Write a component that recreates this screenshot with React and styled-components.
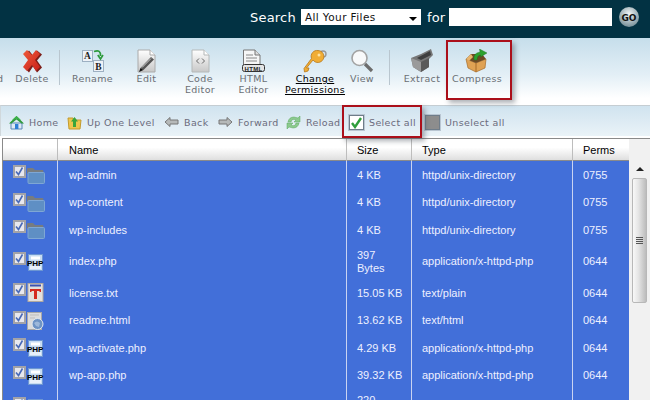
import React from 'react';
import styled, { createGlobalStyle } from 'styled-components';

const Global = createGlobalStyle`
  html, body { margin: 0; padding: 0; background: #fff; }
`;

const Page = styled.div`
  position: relative;
  width: 650px;
  height: 400px;
  overflow: hidden;
  background: #fff;
  font-family: "DejaVu Sans", Verdana, sans-serif;
`;

const SearchBar = styled.div`
  height: 38px;
  background: #023243;
  display: flex;
  align-items: center;
  padding: 0 10px 4px 250px;
  box-sizing: border-box;
  color: #fff;
  font-size: 13px;
`;

const SearchWord = styled.span`
  margin-right: ${props => props.gap}px;
  letter-spacing: .2px;
`;

const FakeSelect = styled.div`
  width: 120px;
  height: 16px;
  background: #fff;
  color: #111;
  font-size: 10.5px;
  line-height: 17px;
  padding-left: 4px;
  box-sizing: border-box;
  margin-right: 6px;
  position: relative;
  letter-spacing: .4px;
  &::after {
    content: '';
    position: absolute;
    right: 4px;
    top: 8px;
    border: 4px solid transparent;
    border-top: 4px solid #000;
    border-bottom: 0;
  }
`;

const SearchInput = styled.div`
  width: 163px;
  height: 18px;
  background: #fff;
  margin: 0 7px 0 -1px;
`;

const Toolbar = styled.div`
  height: 67px;
  display: flex;
  align-items: flex-start;
  padding-top: 11px;
  box-sizing: border-box;
  background: linear-gradient(#c6deeb, #e3eff6 55%, #fff 90%);
  overflow: hidden;
`;

const Tool = styled.div`
  width: ${props => props.width}px;
  margin-left: ${props => props.offset || 0}px;
  flex: none;
  display: flex;
  flex-direction: column;
  align-items: center;
  color: ${props => props.active ? '#000' : '#6a6f74'};
  text-decoration: ${props => props.active ? 'underline' : 'none'};
  font-size: 9.5px;
  line-height: 11px;
  letter-spacing: .35px;
  text-align: center;
`;

const ToolIcon = styled.div`
  height: 24px;
`;

const ClippedTool = styled.div`
  width: 3px;
  margin-right: 2px;
  flex: none;
  overflow: hidden;
  display: flex;
  justify-content: flex-end;
  padding-top: 24px;
  color: #6a6f74;
  font-size: 9.5px;
  line-height: 11px;
`;

const ToolSep = styled.div`
  width: 1px;
  height: 35px;
  flex: none;
  margin-top: 1px;
  background: #b9c6cf;
`;

const NavBar = styled.div`
  height: 31px;
  display: flex;
  align-items: center;
  padding: 2px 0 0 8px;
  box-sizing: border-box;
  border-top: 1px solid #c5cdd2;
  border-left: 1px solid #d0d8dc;
  background: linear-gradient(#d0e3ef, #eaf3f8);
  color: #6b6b7c;
  font-size: 9.5px;
  letter-spacing: .36px;
`;

const NavItem = styled.div`
  display: flex;
  align-items: center;
  gap: 5px;
  flex: none;
  width: ${props => props.width}px;
`;

const Table = styled.div`
  margin: 2px 0 0 2px;
  border-top: 1px solid #8a8a8a;
  border-left: 1px solid #8a8a8a;
  display: flex;
  font-family: "Liberation Sans", Arial, sans-serif;
  font-size: 11px;
`;

const Rows = styled.div`
  width: 626px;
  flex: none;
`;

const columns = '54px 289px 65px 161px 57px';

const HeadRow = styled.div`
  display: grid;
  grid-template-columns: ${columns};
  height: 21px;
  background: linear-gradient(#fff 40%, #dfdfdf);
  border-bottom: 1px solid #8a8a8a;
  color: #000;
`;

const HeadCell = styled.div`
  padding-left: ${props => props.inset || 10}px;
  line-height: 22px;
  box-sizing: border-box;
  border-left: ${props => props.first ? 'none' : '1px solid #bdbdbd'};
`;

const Row = styled.div`
  display: grid;
  grid-template-columns: ${columns};
  height: ${props => props.height}px;
  background: #426fd9;
  color: #eef0ff;
`;

const Cell = styled.div`
  padding: 0 8px 0 ${props => props.inset || 10}px;
  box-sizing: border-box;
  display: flex;
  align-items: center;
  line-height: 13px;
  border-left: 1px solid #c9d3f2;
`;

const IconCell = styled.div`
  display: flex;
  align-items: center;
  padding-left: 10px;
`;

const IconGroup = styled.div`
  display: flex;
  align-items: flex-start;
  height: 20px;
`;

const Check = styled.div`
  width: 13px;
  height: 13px;
  flex: none;
  box-sizing: border-box;
  background: #e8e8ee;
  border: 2px solid #a3a3a8;
  display: flex;
  align-items: center;
  justify-content: center;
`;

const FileIcon = styled.div`
  margin: ${props => props.top}px 0 0 1px;
  flex: none;
`;

const Scrollbar = styled.div`
  width: 21px;
  height: 262px;
  flex: none;
  background: #f1f1f1;
  position: relative;
`;

const ScrollArrow = styled.div`
  position: absolute;
  left: 7px;
  top: 28px;
  border: 4px solid transparent;
  border-bottom: 4px solid #222;
  border-top: 0;
`;

const Thumb = styled.div`
  position: absolute;
  left: 3px;
  top: 39px;
  width: 15px;
  height: 125px;
  box-sizing: border-box;
  border: 1px solid #b8b8b8;
  border-radius: 2px;
  background: linear-gradient(90deg, #f8f8f8, #e6e6e6 40%, #bcbcbc);
  display: flex;
  flex-direction: column;
  align-items: center;
  justify-content: center;
  gap: 1px;
`;

const Grip = styled.div`
  width: 7px;
  height: 1px;
  background: #555;
`;

const Highlight = styled.div`
  position: absolute;
  left: ${props => props.x}px;
  top: ${props => props.y}px;
  width: ${props => props.w}px;
  height: ${props => props.h}px;
  box-sizing: border-box;
  border: 2px solid #ab0f1a;
  box-shadow: 3px 3px 5px rgba(70, 80, 90, .45);
`;

const BigCheck = styled.div`
  width: 15px;
  height: 15px;
  box-sizing: border-box;
  border: 1px solid #6f7d8a;
  background: ${props => props.filled ? '#8d8d8d' : '#fff'};
  outline: 1px solid #b9c6d2;
  display: flex;
  align-items: center;
  justify-content: center;
`;

const DeleteIcon = () => (
  <svg width="22" height="24" viewBox="0 0 22 24">
    <defs>
      <linearGradient id="del" x1="0" y1="0" x2="1" y2="1">
        <stop offset="0" stopColor="#ee5a3a" />
        <stop offset="1" stopColor="#c91f1a" />
      </linearGradient>
    </defs>
    <path d="M3 5 L7 1 L11 6 L15 1 L20 5 L15 11 L20 18 L15 23 L11 17 L7 23 L3 19 L7 11 Z" fill="#7d1d18" transform="translate(1 .6)" />
    <path d="M2 5 L6 1 L11 6 L15 1 L19 5 L14 11 L19 18 L15 22 L11 16 L6 22 L2 18 L7 11 Z" fill="url(#del)" />
  </svg>
);

const RenameIcon = () => (
  <svg width="22" height="24" viewBox="0 0 22 24">
    <rect x="0.5" y="1.5" width="10" height="11" fill="#eef2f7" stroke="#9db0c2" />
    <text x="2" y="10" fontFamily="Liberation Serif" fontSize="9.5" fontWeight="700" fill="#222">A</text>
    <rect x="11.5" y="11.5" width="10" height="11" fill="#eef2f7" stroke="#9db0c2" />
    <text x="13.2" y="20.5" fontFamily="Liberation Serif" fontSize="9.5" fontWeight="700" fill="#222">B</text>
    <path d="M12 2.5 Q19 0 18.5 7 M15.8 6 L18.5 10 L21 6" fill="none" stroke="#2d9a3c" strokeWidth="1.7" />
  </svg>
);

const EditIcon = () => (
  <svg width="19" height="24" viewBox="0 0 19 24">
    <defs>
      <linearGradient id="page" x1="0" y1="0" x2="0" y2="1">
        <stop offset="0" stopColor="#fff" />
        <stop offset="1" stopColor="#c8c8c8" />
      </linearGradient>
    </defs>
    <path d="M1 1 H13 L18 6 V23 H1 Z" fill="url(#page)" stroke="#aaa" />
    <path d="M13 1 V6 H18" fill="#fff" stroke="#aaa" />
    <path d="M3.5 19 L14 8 L17 10.5 L6.5 21 Z" fill="#555" />
    <path d="M5 18.5 L14 9.5" stroke="#eee" strokeWidth=".8" />
    <path d="M2 23 L3.5 19 L6.5 21 Z" fill="#111" />
  </svg>
);

const CodeIcon = () => (
  <svg width="19" height="24" viewBox="0 0 19 24">
    <path d="M1 1 H13 L18 6 V23 H1 Z" fill="url(#page)" stroke="#b4b8b8" />
    <path d="M13 1 V6 H18" fill="#fff" stroke="#b4b8b8" />
    <path d="M8 9.5 L5.5 12 L8 14.5 M11 9.5 L13.5 12 L11 14.5" fill="none" stroke="#666" />
  </svg>
);

const HtmlIcon = () => (
  <svg width="23" height="24" viewBox="0 0 23 24">
    <path d="M1.5 1 H13 L18 6 V17 H1.5 Z" fill="#f6f6f6" stroke="#777" />
    <path d="M13 1 V6 H18" fill="#ddd" stroke="#777" />
    <path d="M4 6 H11 M4 9 H15 M4 12 H15" stroke="#888" />
    <rect x="0.5" y="15.5" width="22" height="7" rx="2" fill="#e4e4e4" stroke="#333" />
    <text x="2.5" y="21.5" fontFamily="Liberation Sans" fontSize="6" fontWeight="700" fill="#222">HTML</text>
  </svg>
);

const KeyIcon = () => (
  <svg width="24" height="24" viewBox="0 0 24 24">
    <circle cx="20" cy="5" r="3" fill="none" stroke="#999" strokeWidth="1.4" />
    <path d="M15 1.5 a6 6 0 1 1 -5 9.5 L3.5 19 L6 19 L5 22 L1.5 23 L1 19.5 L8.5 9.5 A6 6 0 0 1 15 1.5 Z" fill="#f0ad35" stroke="#b8791a" strokeWidth=".8" />
    <circle cx="16" cy="6" r="1.5" fill="#ffe3a0" />
  </svg>
);

const ViewIcon = () => (
  <svg width="24" height="24" viewBox="0 0 24 24">
    <circle cx="9.5" cy="9" r="7.5" fill="#f8f9fa" stroke="#a2a2a2" strokeWidth="1.6" />
    <path d="M15 15 L22 22" stroke="#6c6c6c" strokeWidth="3.2" />
  </svg>
);

const ExtractIcon = () => (
  <svg width="24" height="24" viewBox="0 0 24 24">
    <path d="M1 9 L11 5 L21 0 L23 6 L19 10 V18 L11 23 L3 18 Z" fill="#777" />
    <path d="M11 13 L19 9 V18 L11 23 Z" fill="#5a5a5a" />
    <path d="M1 9 L11 13 V23 L3 18 Z" fill="#9a9a9a" />
    <path d="M7 9 L20 2 L21 6 L11 11 Z" fill="#3e3e3e" />
  </svg>
);

const CompressIcon = () => (
  <svg width="24" height="24" viewBox="0 0 24 24">
    <path d="M1 10 L11 14 L21 10 L20 19 L11 23 L3 19 Z" fill="#dfa254" stroke="#a66b28" strokeWidth=".7" />
    <path d="M11 14 V23" stroke="#a66b28" />
    <path d="M1 10 L6 5 L17 5 L21 10 L11 14 Z" fill="#6d4a24" />
    <path d="M1 10 L6 5 L8 8 L4 12 Z" fill="#e8b36b" />
    <path d="M9 11 Q8 4 15 3 L14.5 0 L22 4 L15.5 8 L15.5 6 Q12 6.5 12 11 Z" fill="#2ca12f" stroke="#1d6d20" strokeWidth=".4" />
  </svg>
);

const HomeIcon = () => (
  <svg width="15" height="15" viewBox="0 0 15 15">
    <path d="M2 8 V14 H13 V8 Z" fill="#dfe9f4" stroke="#5a88b8" />
    <rect x="6" y="9" width="3.4" height="5" fill="#2f7fd6" />
    <path d="M0 8.5 L7.5 1 L15 8.5 L12.5 8.5 L7.5 4.5 L2.5 8.5 Z" fill="#2f9a3c" />
    <path d="M3 5 L7.5 1 L12 5 L7.5 4 Z" fill="#3cb04a" />
  </svg>
);

const UpIcon = () => (
  <svg width="15" height="15" viewBox="0 0 15 15">
    <path d="M1 3 H6 L7 5 H14 L13 14 H2 Z" fill="#efc64d" stroke="#c39a2c" />
    <path d="M7.5 2 L11 6.5 H9 V12 H6 V6.5 H4 Z" fill="#3aa53c" />
  </svg>
);

const ArrowIcon = ({ flip }) => (
  <svg width="15" height="12" viewBox="0 0 15 12" transform={flip ? 'scale(-1 1)' : undefined}>
    <path d="M1 6 L6 1.5 V4 H14 V8 H6 V10.5 Z" fill="#b6b9b9" stroke="#777" />
  </svg>
);

const ReloadIcon = () => (
  <svg width="15" height="15" viewBox="0 0 15 15">
    <path d="M2 7 Q3 2 8 2 L12 3 L14 1 V7 H8 L10 5 Q6 3 5 7 Z" fill="#8cc98e" stroke="#5aa85c" strokeWidth=".5" />
    <path d="M13 8 Q12 13 7 13 L3 12 L1 14 V8 H7 L5 10 Q9 12 10 8 Z" fill="#8cc98e" stroke="#5aa85c" strokeWidth=".5" />
  </svg>
);

const GoIcon = () => (
  <svg width="20" height="20" viewBox="0 0 20 20">
    <defs>
      <radialGradient id="go" cx=".5" cy=".35" r=".7">
        <stop offset="0" stopColor="#f2f6f7" />
        <stop offset="1" stopColor="#6d8791" />
      </radialGradient>
    </defs>
    <circle cx="10" cy="10" r="10" fill="url(#go)" />
    <text x="10" y="13.5" textAnchor="middle" fontFamily="DejaVu Sans" fontSize="9" fontWeight="700" fill="#111">GO</text>
  </svg>
);

const SmallTick = () => (
  <svg width="9" height="9" viewBox="0 0 9 9">
    <path d="M1 4.5 L3.5 7.5 L7.5 .5" fill="none" stroke="#4a6bb8" strokeWidth="1.6" />
  </svg>
);

const BigTick = () => (
  <svg width="13" height="13" viewBox="0 0 13 13">
    <path d="M2 7 L5 11 L11 2" fill="none" stroke="#2f9e3c" strokeWidth="2.4" />
  </svg>
);

const FolderIcon = () => (
  <svg width="18" height="16" viewBox="0 0 18 16">
    <path d="M0 1 Q0 0 1 0 H6 L8 2 H16 L17 6 H0 Z" fill="#777c80" />
    <rect x="1" y="4.5" width="16.5" height="11" rx="1" fill="#5f8fc4" stroke="#7fa7d4" />
  </svg>
);

const PhpIcon = () => (
  <svg width="17" height="17" viewBox="0 0 17 17">
    <rect x="1.5" y="0.5" width="14" height="16" fill="#c7dcf2" stroke="#6d96d2" />
    <rect x="4" y="2.5" width="9" height="3" fill="#fff" />
    <rect x="3" y="12" width="11" height="3" fill="#e8f0fa" />
    <text x="0" y="11.5" fontFamily="Liberation Sans" fontSize="8" fontWeight="700" fill="#000">PHP</text>
  </svg>
);

const TextIcon = () => (
  <svg width="17" height="19" viewBox="0 0 17 19">
    <rect x="1" y="0.5" width="15" height="18" fill="#e4e0dc" stroke="#b0a8a0" />
    <path d="M3 2.5 H14" stroke="#3c52b0" strokeWidth="2" />
    <path d="M3 6 H14 V9 H12.5 V8 H10 V16 H7 V8 H4.5 V9 H3 Z" fill="#d42a20" />
  </svg>
);

const HtmlFileIcon = () => (
  <svg width="17" height="18" viewBox="0 0 17 18">
    <rect x="0.5" y="0.5" width="14" height="17" fill="#dcdcdc" stroke="#a8a8a8" />
    <path d="M3 3 H12 M3 6 H8" stroke="#bdbdbd" />
    <circle cx="10.5" cy="12" r="5.5" fill="#6d93c4" stroke="#dfe6ee" />
    <path d="M7 11 Q10 8 13 11 L12 15 L9 14 Z" fill="#9db8da" />
  </svg>
);

const icons = {
  folder: { drawing: <FolderIcon />, top: 3 },
  php: { drawing: <PhpIcon />, top: 2 },
  text: { drawing: <TextIcon />, top: 0 },
  html: { drawing: <HtmlFileIcon />, top: 1 },
};

const files = [
  { name: 'wp-admin', size: '4 KB', type: 'httpd/unix-directory', perms: '0755', icon: 'folder', height: 28 },
  { name: 'wp-content', size: '4 KB', type: 'httpd/unix-directory', perms: '0755', icon: 'folder', height: 27 },
  { name: 'wp-includes', size: '4 KB', type: 'httpd/unix-directory', perms: '0755', icon: 'folder', height: 28 },
  { name: 'index.php', size: '397 Bytes', type: 'application/x-httpd-php', perms: '0644', icon: 'php', height: 35 },
  { name: 'license.txt', size: '15.05 KB', type: 'text/plain', perms: '0644', icon: 'text', height: 28 },
  { name: 'readme.html', size: '13.62 KB', type: 'text/html', perms: '0644', icon: 'html', height: 27 },
  { name: 'wp-activate.php', size: '4.29 KB', type: 'application/x-httpd-php', perms: '0644', icon: 'php', height: 28 },
  { name: 'wp-app.php', size: '39.32 KB', type: 'application/x-httpd-php', perms: '0644', icon: 'php', height: 27 },
  { name: 'wp-atom.php', size: '220 Bytes', type: 'application/x-httpd-php', perms: '0644', icon: 'php', height: 35 },
];

function App() {
  return (
    <Page>
      <Global />
      <SearchBar>
        <SearchWord gap={5}>Search</SearchWord>
        <FakeSelect>All Your Files</FakeSelect>
        <SearchWord gap={5}>for</SearchWord>
        <SearchInput />
        <GoIcon />
      </SearchBar>
      <Toolbar>
        <ClippedTool>Upload</ClippedTool>
        <Tool width={54}><ToolIcon><DeleteIcon /></ToolIcon>Delete</Tool>
        <ToolSep />
        <Tool width={65}><ToolIcon><RenameIcon /></ToolIcon>Rename</Tool>
        <Tool width={43}><ToolIcon><EditIcon /></ToolIcon>Edit</Tool>
        <Tool width={64}><ToolIcon><CodeIcon /></ToolIcon>Code<br />Editor</Tool>
        <Tool width={43}><ToolIcon><HtmlIcon /></ToolIcon>HTML<br />Editor</Tool>
        <Tool width={70} offset={5} active><ToolIcon><KeyIcon /></ToolIcon>Change<br />Permissions</Tool>
        <Tool width={24}><ToolIcon><ViewIcon /></ToolIcon>View</Tool>
        <Tool width={15} />
        <ToolSep />
        <Tool width={62} offset={1}><ToolIcon><ExtractIcon /></ToolIcon>Extract</Tool>
        <Tool width={48}><ToolIcon><CompressIcon /></ToolIcon>Compress</Tool>
      </Toolbar>
      <NavBar>
        <NavItem width={58}><HomeIcon />Home</NavItem>
        <NavItem width={97}><UpIcon />Up One Level</NavItem>
        <NavItem width={54}><ArrowIcon />Back</NavItem>
        <NavItem width={68}><ArrowIcon flip />Forward</NavItem>
        <NavItem width={63}><ReloadIcon />Reload</NavItem>
        <NavItem width={76}><BigCheck><BigTick /></BigCheck>Select all</NavItem>
        <NavItem width={90}><BigCheck filled />Unselect all</NavItem>
      </NavBar>
      <Table>
        <Rows>
          <HeadRow>
            <HeadCell first />
            <HeadCell inset={11}>Name</HeadCell>
            <HeadCell>Size</HeadCell>
            <HeadCell>Type</HeadCell>
            <HeadCell>Perms</HeadCell>
          </HeadRow>
          {files.map(file => (
            <Row key={file.name} height={file.height}>
              <IconCell>
                <IconGroup>
                  <Check><SmallTick /></Check>
                  <FileIcon top={icons[file.icon].top}>{icons[file.icon].drawing}</FileIcon>
                </IconGroup>
              </IconCell>
              <Cell inset={11}>{file.name}</Cell>
              <Cell>{file.size}</Cell>
              <Cell>{file.type}</Cell>
              <Cell>{file.perms}</Cell>
            </Row>
          ))}
        </Rows>
        <Scrollbar>
          <ScrollArrow />
          <Thumb><Grip /><Grip /><Grip /><Grip /></Thumb>
        </Scrollbar>
      </Table>
      <Highlight x={446} y={40} w={66} h={60} />
      <Highlight x={342} y={105} w={80} h={33} />
    </Page>
  );
}

export default App;
